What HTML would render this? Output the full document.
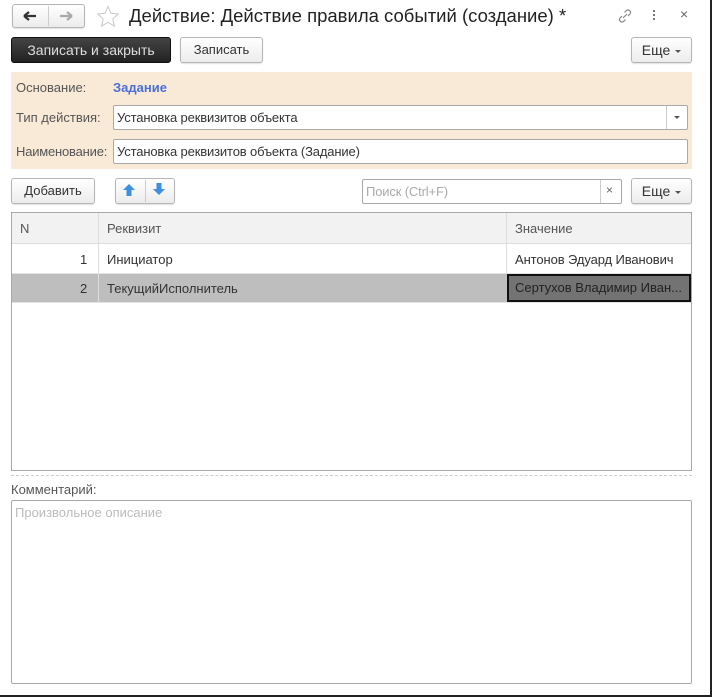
<!DOCTYPE html>
<html><head><meta charset="utf-8"><style>
*{box-sizing:border-box;margin:0;padding:0}
body{width:712px;height:697px;background:#fff;font-family:"Liberation Sans",Arial,sans-serif;font-size:13px;color:#333;position:relative;overflow:hidden}
.a{position:absolute}
.btn{position:absolute;border:1px solid #b5b5b5;border-radius:3px;background:linear-gradient(#fff,#ececec);text-align:center;color:#333;box-shadow:0 1px 1px rgba(0,0,0,.12)}
.fld{position:absolute;background:#fff;border:1px solid #a9a9a9;border-radius:2px;padding-left:3px;color:#333;letter-spacing:-0.15px}
.tri{display:inline-block;width:0;height:0;border-left:3px solid transparent;border-right:3px solid transparent;border-top:3px solid #555;vertical-align:middle;margin-left:5px}
</style></head><body>
<div class="a" style="right:0;top:0;width:2px;height:697px;background:#222"></div>
<div class="a" style="left:0;bottom:0;width:712px;height:2px;background:#222"></div>

<div class="btn" style="left:12px;top:4px;width:73px;height:24px"></div>
<div class="a" style="left:48px;top:6px;width:1px;height:20px;background:#ccc"></div>
<svg class="a" style="left:22px;top:9px" width="16" height="14"><path d="M2 7h12M2 7l5-4M2 7l5 4" stroke="#333" stroke-width="2.2" fill="none"/></svg>
<svg class="a" style="left:58px;top:9px" width="16" height="14"><path d="M2 7h12M14 7l-5-4M14 7l-5 4" stroke="#aaa" stroke-width="2.2" fill="none"/></svg>
<svg class="a" style="left:96px;top:5px" width="24" height="22"><path d="M12 1.5l3 6.8 7.3.7-5.5 4.9 1.6 7.2L12 17.3 5.6 21.1l1.6-7.2L1.7 9l7.3-.7z" fill="none" stroke="#c8c8c8" stroke-width="1"/></svg>
<div class="a" style="left:129px;top:5px;font-size:18.5px;color:#222;white-space:nowrap">Действие: Действие правила событий (создание) *</div>
<svg class="a" style="left:616px;top:7px" width="18" height="18"><path d="M7 11l4-4M6 9l-2 2a2.5 2.5 0 003.5 3.5l2-2M12 9l2-2a2.5 2.5 0 00-3.5-3.5l-2 2" stroke="#888" stroke-width="1.2" fill="none"/></svg>
<div class="a" style="left:653px;top:10px;width:2px;height:2px;background:#777;box-shadow:0 4px #777,0 8px #777"></div>
<div class="a" style="left:680px;top:6px;font-size:14px;color:#666">×</div>

<div class="a" style="left:11px;top:37px;width:160px;height:26px;background:linear-gradient(#444,#222);border:1px solid #111;border-radius:3px;color:#ddd;text-align:center;line-height:24px;font-size:14px">Записать и закрыть</div>
<div class="btn" style="left:180px;top:37px;width:83px;height:26px;line-height:24px">Записать</div>
<div class="btn" style="left:631px;top:37px;width:61px;height:26px;line-height:24px;font-size:14px">Еще<span class="tri"></span></div>

<div class="a" style="left:11px;top:72px;width:681px;height:97px;background:#f9ead7"></div>
<div class="a" style="left:16px;top:80px;color:#555">Основание:</div>
<div class="a" style="left:113px;top:80px;color:#4a6fd8;font-weight:bold">Задание</div>
<div class="a" style="left:16px;top:110px;color:#555">Тип действия:</div>
<div class="fld" style="left:113px;top:105px;width:575px;height:25px;line-height:23px">Установка реквизитов объекта</div>
<div class="a" style="left:666px;top:106px;width:1px;height:23px;background:#ccc"></div>
<div class="a" style="left:674px;top:116px;border-left:3px solid transparent;border-right:3px solid transparent;border-top:3px solid #555"></div>
<div class="a" style="left:16px;top:144px;color:#555;letter-spacing:-0.2px">Наименование:</div>
<div class="fld" style="left:113px;top:139px;width:575px;height:25px;line-height:23px">Установка реквизитов объекта (Задание)</div>

<div class="btn" style="left:11px;top:178px;width:84px;height:26px;line-height:24px">Добавить</div>
<div class="btn" style="left:115px;top:178px;width:60px;height:26px"></div>
<div class="a" style="left:145px;top:180px;width:1px;height:22px;background:#ccc"></div>
<svg class="a" style="left:122px;top:183px" width="14" height="14"><path d="M7 1L1 7h3.5v6h5V7H13z" fill="#3d8fe0"/></svg>
<svg class="a" style="left:152px;top:182px" width="14" height="14"><path d="M7 13L1 7h3.5V1h5v6H13z" fill="#3d8fe0"/></svg>
<div class="fld" style="left:362px;top:179px;width:260px;height:25px;line-height:23px;color:#aaa">Поиск (Ctrl+F)</div>
<div class="a" style="left:600px;top:180px;width:1px;height:23px;background:#ccc"></div>
<div class="a" style="left:606px;top:183px;font-size:12px;color:#666">×</div>
<div class="btn" style="left:631px;top:178px;width:61px;height:26px;line-height:24px;font-size:14px">Еще<span class="tri"></span></div>

<div class="a" style="left:11px;top:212px;width:681px;height:259px;border:1px solid #a9a9a9"></div>
<div class="a" style="left:12px;top:213px;width:679px;height:31px;background:#f2f2f2;border-bottom:1px solid #ddd"></div>
<div class="a" style="left:98px;top:213px;width:1px;height:90px;background:#ddd"></div>
<div class="a" style="left:506px;top:213px;width:1px;height:90px;background:#ddd"></div>
<div class="a" style="left:20px;top:221px;color:#555">N</div>
<div class="a" style="left:107px;top:221px;color:#555">Реквизит</div>
<div class="a" style="left:515px;top:221px;color:#555">Значение</div>
<div class="a" style="left:12px;top:273px;width:679px;height:1px;background:#e3e3e3"></div>
<div class="a" style="left:80px;top:252px">1</div>
<div class="a" style="left:107px;top:252px">Инициатор</div>
<div class="a" style="left:515px;top:252px;letter-spacing:-0.1px">Антонов Эдуард Иванович</div>
<div class="a" style="left:12px;top:274px;width:679px;height:28px;background:#bebebe"></div>
<div class="a" style="left:98px;top:274px;width:1px;height:28px;background:#ddd"></div>
<div class="a" style="left:80px;top:281px">2</div>
<div class="a" style="left:107px;top:281px">ТекущийИсполнитель</div>
<div class="a" style="left:507px;top:274px;width:184px;height:28px;background:#737373;border:2px solid #111;padding-left:6px;line-height:24px;color:#222;white-space:nowrap;overflow:hidden">Сертухов Владимир Иван...</div>
<div class="a" style="left:12px;top:302px;width:679px;height:1px;background:#e3e3e3"></div>

<div class="a" style="left:11px;top:475px;width:681px;border-top:1px dashed #ccc"></div>
<div class="a" style="left:11px;top:482px;color:#555">Комментарий:</div>
<div class="a" style="left:11px;top:500px;width:681px;height:184px;border:1px solid #a9a9a9;border-radius:2px;padding:4px 3px;color:#bbb">Произвольное описание</div>
</body></html>
